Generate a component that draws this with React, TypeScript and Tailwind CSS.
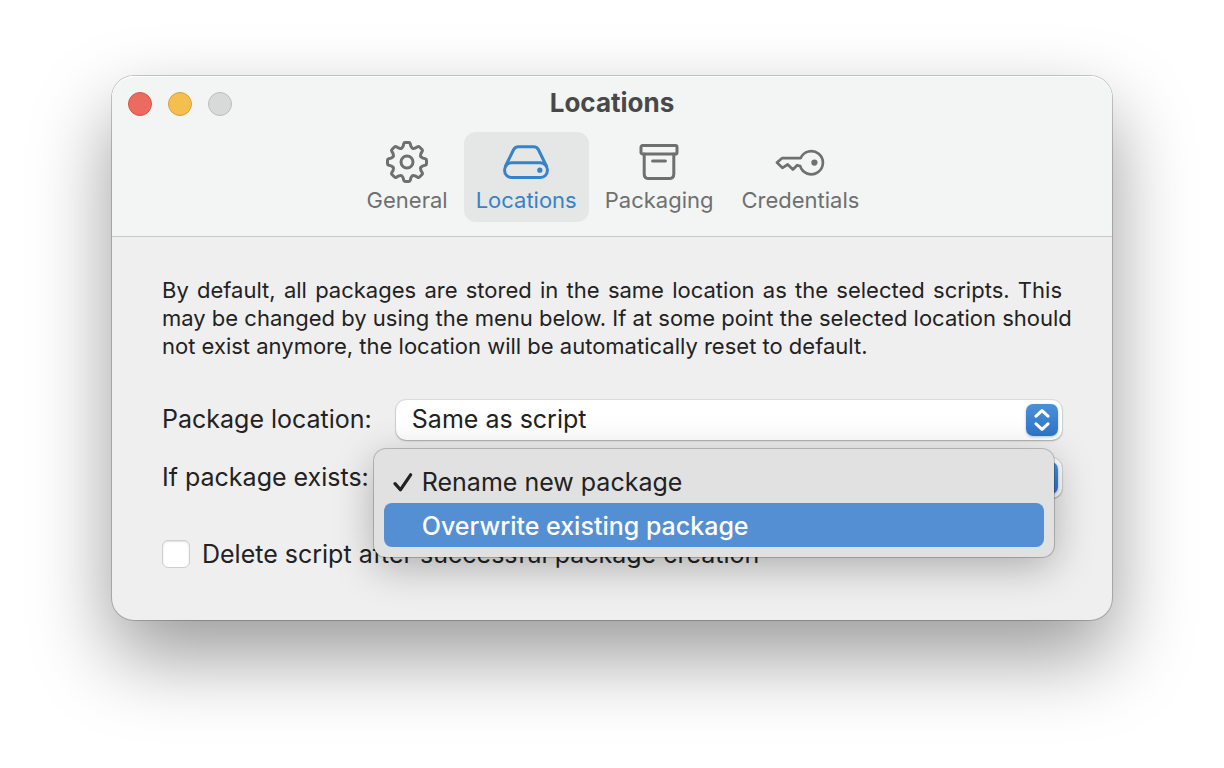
import { useState } from "react";
import type { ReactNode } from "react";

function gearPath() {
  const c = 22;
  const point = (a: number, x: number, y: number) => {
    const px = c + x * Math.cos(a) - y * Math.sin(a);
    const py = c + x * Math.sin(a) + y * Math.cos(a);
    return `${px.toFixed(2)} ${py.toFixed(2)}`;
  };
  let d = "";
  for (let i = 0; i < 8; i++) {
    const a = (i * Math.PI) / 4;
    d += `${i === 0 ? "M" : "Q" + point(a - Math.PI / 8, 0, -14) + " "}${point(a, -4.6, -14.8)}`;
    d += `Q${point(a, -3.9, -15.3)} ${point(a, -3.6, -16.8)}`;
    d += `L${point(a, -3.3, -18.2)}Q${point(a, -3, -19.5)} ${point(a, -1.8, -19.5)}`;
    d += `L${point(a, 1.8, -19.5)}Q${point(a, 3, -19.5)} ${point(a, 3.3, -18.2)}`;
    d += `L${point(a, 3.6, -16.8)}Q${point(a, 3.9, -15.3)} ${point(a, 4.6, -14.8)}`;
  }
  return `${d}Q${point(-Math.PI / 8, 0, -14)} ${point(0, -4.6, -14.8)}Z`;
}

const stroke = {
  fill: "none",
  stroke: "currentColor",
  strokeWidth: 3,
  strokeLinecap: "round",
  strokeLinejoin: "round",
} as const;

const GearIcon = () => (
  <svg width="44" height="44" viewBox="0 0 44 44" aria-hidden="true" {...stroke}>
    <path d={gearPath()} />
    <circle cx="22" cy="22" r="6" />
  </svg>
);

const DriveIcon = () => (
  <svg width="46" height="36" viewBox="0 -1 46 36" aria-hidden="true" {...stroke}>
    <rect x="1.6" y="17.8" width="42.8" height="14.8" rx="7" />
    <path d="M2.6 21 10.4 5Q12 1.8 15.4 1.8h15.2q3.4 0 5 3.2L43.4 21" />
    <circle cx="36.8" cy="25.2" r="2.6" fill="currentColor" stroke="none" />
  </svg>
);

const BoxIcon = () => (
  <svg width="40" height="38" viewBox="0 0 40 38" aria-hidden="true" {...stroke}>
    <rect x="2" y="2.6" width="36" height="8.4" rx="1.6" />
    <path d="M5.2 11v20q0 4.6 4.6 4.6h20.4q4.6 0 4.6-4.6V11M13.6 18h12.8" />
  </svg>
);

const KeyIcon = () => (
  <svg width="50" height="27" viewBox="0 0 50 27" aria-hidden="true" {...stroke}>
    <path
      strokeWidth="2.7"
      d="M25.6 9.2H7l-5 4.3 5.4 5.4 5.3-3.4 5.2 5 4.2-4.3 3.1.9A11.6 11.6 0 1 0 25.6 9.2Z"
    />
    <circle cx="39.4" cy="13.6" r="3.1" fill="currentColor" stroke="none" />
  </svg>
);

const tabs: { name: string; icon: ReactNode }[] = [
  { name: "General", icon: <GearIcon /> },
  { name: "Locations", icon: <DriveIcon /> },
  { name: "Packaging", icon: <BoxIcon /> },
  { name: "Credentials", icon: <KeyIcon /> },
];

const existsOptions = ["Rename new package", "Overwrite existing package"];

function PopUp({ id, options, value, onChange }: {
  id: string;
  options: string[];
  value?: string;
  onChange?: (value: string) => void;
}) {
  return (
    <div className="relative">
      <select
        id={id}
        value={value}
        onChange={(e) => onChange?.(e.target.value)}
        className="block h-10 w-full appearance-none rounded-[10px] bg-white pr-12 pb-0.5 pl-4 text-[25px] leading-[38px] shadow-[0_0_0_1px_rgba(0,0,0,0.07),0_1px_2px_rgba(0,0,0,0.25)] outline-none"
      >
        {options.map((o) => (
          <option key={o}>{o}</option>
        ))}
      </select>
      <span className="pointer-events-none absolute top-1 right-1 flex size-8 items-center justify-center rounded-[7px] bg-linear-to-b from-[#4a90d6] to-[#2f74c8] text-white shadow-[0_1px_3px_rgba(47,116,200,0.4)]">
        <svg width="16" height="24" viewBox="0 0 16 24" aria-hidden="true" {...stroke}>
          <path d="M2 8.2 8 2.6l6 5.6M2 15.8l6 5.6 6-5.6" />
        </svg>
      </span>
    </div>
  );
}

export default function App() {
  const [tab, setTab] = useState("Locations");
  const [choice, setChoice] = useState(existsOptions[0]);
  const [active, setActive] = useState(existsOptions[1]);

  return (
    <div className="min-h-screen overflow-hidden bg-white px-28 pt-[76px] pb-16 font-['Inter','Liberation_Sans',sans-serif] text-[#222]">
      <main className="rounded-[22px] bg-[#efefef] shadow-[0_0_0_1px_rgba(0,0,0,0.2),0_36px_80px_rgba(0,0,0,0.4)]">
        <header className="rounded-t-[22px] border-b border-[#c8caca] bg-[#f3f5f4] pt-4 pb-3.5 shadow-[inset_0_1px_0_#fff]">
          <div className="grid h-6 grid-cols-[1fr_auto_1fr] items-center px-4">
            <div className="flex gap-4">
              <button aria-label="Close" className="size-6 rounded-full border border-[#d4554b] bg-[#ec6a5e]" />
              <button aria-label="Minimize" className="size-6 rounded-full border border-[#d9a03c] bg-[#f4bf4f]" />
              <button aria-label="Zoom" disabled className="size-6 rounded-full border border-[#bcbebd] bg-[#d8dad9]" />
            </div>
            <h1 className="pb-0.5 text-[26px] leading-[22px] font-bold text-[#484848]">Locations</h1>
          </div>
          <nav className="mt-4 flex justify-center gap-1 pl-0.5">
            {tabs.map(({ name, icon }) => (
              <button
                key={name}
                onClick={() => setTab(name)}
                aria-current={tab === name ? "page" : undefined}
                className={
                  tab === name
                    ? "rounded-xl bg-[#e5e7e6] px-3 py-2 text-[#3782c8]"
                    : "rounded-xl px-3 py-2 text-[#6e706f]"
                }
              >
                <span className="flex h-11 items-center justify-center">{icon}</span>
                <span className="mt-0.5 block text-[22px] leading-7">{name}</span>
              </button>
            ))}
          </nav>
        </header>

        <section className="px-[50px] pt-[39px] pb-[52px]">
          <p className="text-[22px] leading-7">
            <span className="block [text-align-last:justify]">
              By default, all packages are stored in the same location as the selected scripts. This{" "}
            </span>
            <span className="block whitespace-nowrap [text-align-last:justify]">
              may be changed by using the menu below. If at some point the selected location should{" "}
            </span>
            <span className="block">
              not exist anymore, the location will be automatically reset to default.
            </span>
          </p>

          <div className="mt-10 grid grid-cols-[auto_1fr] items-center gap-x-6 gap-y-[18px] text-[25px]">
            <label htmlFor="location" className="pb-0.5 leading-[38px]">Package location:</label>
            <PopUp id="location" options={["Same as script"]} />

            <label htmlFor="exists" className="pb-0.5 leading-[38px]">If package exists:</label>
            <div className="relative">
              <PopUp id="exists" options={existsOptions} value={choice} onChange={setChoice} />
              <ul
                role="listbox"
                aria-label="If package exists"
                className="absolute -top-[9px] right-2 -left-[22px] z-10 rounded-xl bg-[#e1e1e1] px-2.5 py-2.5 shadow-[0_0_0_1px_rgba(0,0,0,0.2),0_10px_40px_rgba(0,0,0,0.28)]"
              >
                {existsOptions.map((o) => (
                  <li key={o} role="option" aria-selected={choice === o}>
                    <button
                      onMouseEnter={() => setActive(o)}
                      onClick={() => setChoice(o)}
                      className={
                        active === o
                          ? "flex h-11 w-full items-center rounded-lg bg-[#548fd3] pt-1 text-left font-medium text-white"
                          : "flex h-11 w-full items-center rounded-lg pt-1 text-left"
                      }
                    >
                      <span className="flex w-[38px] justify-center">
                        {choice === o && (
                          <svg width="20" height="20" viewBox="0 0 20 20" aria-hidden="true" {...stroke} strokeWidth="3.2">
                            <path d="m2 10.6 5.4 6.2L17.6 1.8" />
                          </svg>
                        )}
                      </span>
                      {o}
                    </button>
                  </li>
                ))}
              </ul>
            </div>
          </div>

          <div className="mt-[42px] flex items-center gap-3">
            <input
              id="delete"
              type="checkbox"
              className="size-7 appearance-none rounded-md border border-[#cfcfcf] bg-white shadow-[inset_0_1px_2px_rgba(0,0,0,0.12)] checked:bg-[#3782c8]"
            />
            <label htmlFor="delete" className="text-[25px] leading-7">
              Delete script after successful package creation
            </label>
          </div>
        </section>
      </main>
    </div>
  );
}
